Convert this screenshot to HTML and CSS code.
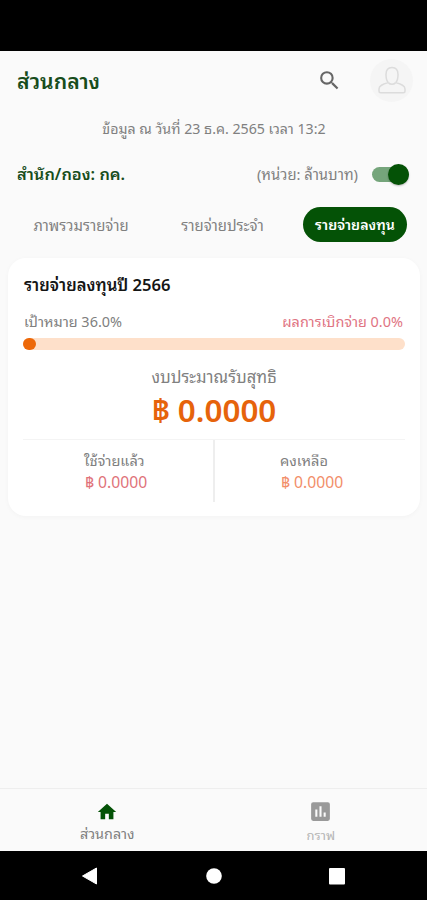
FILE: index.html
```html
<!DOCTYPE html>
<html lang="th">
<head>
<meta charset="utf-8">
<meta name="viewport" content="width=device-width, initial-scale=1">
<title>ส่วนกลาง</title>
<link rel="stylesheet" href="styles.css">
</head>
<body>
<div class="status-bar"></div>
<main>
  <header class="top">
    <h1>ส่วนกลาง</h1>
    <svg class="search" viewBox="0 0 24 24"><path d="M15.5 14h-.79l-.28-.27A6.47 6.47 0 0 0 16 9.500 6.500 6.500 0 1 0 9.500 16c1.610 0 3.090-.59 4.230-1.570l.27.28v.79l5 4.990L20.490 19zm-6 0a4.500 4.500 0 1 1 0-9 4.500 4.500 0 0 1 0 9z"/></svg>
    <div class="avatar"><svg viewBox="0 0 30 30"><path d="M11.200 17.600C9.700 16 9 13 9 9.500 9 5 11.200 2.500 15 2.500s6 2.500 6 7c0 3.500-.7 6.500-2.200 8.100M11.200 17.600c2.200 2.200 5.400 2.200 7.600 0M11.200 17.600C5.500 19.200 2 20.500 2 24v2.200q0 1.500 1.500 1.500h23q1.500 0 1.500-1.500V24c0-3.500-3.500-4.800-9.200-6.400"/></svg></div>
  </header>
  <p class="date">ข้อมูล ณ วันที่ 23 ธ.ค. 2565 เวลา 13:2</p>
  <div class="office">
    <strong>สำนัก/กอง: กค.</strong>
    <span class="unit">(หน่วย: ล้านบาท)</span>
    <span class="switch"></span>
  </div>
  <nav class="tabs">
    <span class="tab">ภาพรวมรายจ่าย</span>
    <span class="tab">รายจ่ายประจำ</span>
    <span class="tab active">รายจ่ายลงทุน</span>
  </nav>
  <section class="card">
    <h2>รายจ่ายลงทุนปี 2566</h2>
    <div class="labels"><span>เป้าหมาย 36.0%</span><span class="result">ผลการเบิกจ่าย 0.0%</span></div>
    <div class="progress"><i></i></div>
    <p class="net">งบประมาณรับสุทธิ</p>
    <p class="total">฿ 0.0000</p>
    <div class="split">
      <div class="spent"><p>ใช้จ่ายแล้ว</p><b>฿ 0.0000</b></div>
      <div class="left"><p>คงเหลือ</p><b>฿ 0.0000</b></div>
    </div>
  </section>
</main>
<nav class="bottom">
  <div class="home"><svg viewBox="0 0 24 24"><path d="M10 20v-6h4v6h5v-8h3L12 3 2 12h3v8z"/></svg><span>ส่วนกลาง</span></div>
  <div class="graph"><svg viewBox="0 0 24 24"><path d="M19 3H5a2 2 0 0 0-2 2v14a2 2 0 0 0 2 2h14a2 2 0 0 0 2-2V5a2 2 0 0 0-2-2zM9 17H7v-7h2zm4 0h-2V7h2zm4 0h-2v-4h2z"/></svg><span>กราฟ</span></div>
</nav>
<div class="system">
  <svg viewBox="0 0 18 20"><path d="M1.500 10 15.500 2v16z" stroke="#fff" stroke-linejoin="round"/></svg>
  <svg viewBox="0 0 18 20"><circle cx="9" cy="10" r="7.800"/></svg>
  <svg viewBox="0 0 18 20"><rect x="1" y="2" width="16" height="16.500" rx="1"/></svg>
</div>
</body>
</html>
```
FILE: styles.css
```css
* { box-sizing: border-box; margin: 0; }
body {
  width: 427px; height: 900px; overflow: hidden;
  display: flex; flex-direction: column;
  background: #fafafa; color: #808080;
  font-family: "Noto Sans", "Noto Sans Thai Looped", Garuda, Sarabun, sans-serif;
  font-size: 15px; white-space: nowrap;
}
.status-bar { height: 51px; background: #000; flex: none; }
main { flex: 1; }
.top { height: 58px; display: flex; align-items: center; padding: 0 14px 0 17px; }
h1 { flex: 1; font-size: 21.200px; line-height: 30px; font-weight: 600; color: #174d1c; padding-top: 1px; }
.search { width: 25px; height: 25px; fill: #666; margin-right: 28px; }
.avatar { width: 43px; height: 43px; border-radius: 50%; background: #f5f5f5; display: grid; place-items: center; }
.avatar svg { width: 30px; height: 30px; fill: none; stroke: #dcdcdc; stroke-width: 1.500; stroke-linejoin: round; }
.date { height: 40px; line-height: 40px; text-align: center; font-size: 14.200px; padding-left: 1px; }
.office { height: 50px; display: flex; align-items: center; padding: 0 18px 0 17px; }
.office strong { flex: 1; font-size: 16.400px; line-height: 22px; font-weight: 600; color: #174d1c; }
.unit { font-size: 14.800px; line-height: 20px; margin: 0 14px 1px 0; }
.switch { width: 37px; height: 15px; border-radius: 8px; background: #75a57b; position: relative; }
.switch::after { content: ""; position: absolute; right: 0; top: -3px; width: 21px; height: 21px; border-radius: 50%; background: #045206; box-shadow: 0 1px 2px #0004; }
.tabs { height: 51px; display: grid; grid-template-columns: 128px 125px 104px; column-gap: 15px; padding-left: 17px; align-items: center; text-align: center; }
.tab { height: 35px; line-height: 36px; font-size: 14.900px; }
.active { background: #045206; color: #fff; border-radius: 18px; font-size: 14.200px; font-weight: 600; margin-left: 3px; margin-right: -3px; }
.card { margin: 8px 7px 0 8px; height: 258px; padding: 15px 15px 0; background: #fff; border-radius: 18px; box-shadow: 0 1px 5px #00000008; }
h2 { color: #151515; font-size: 16.600px; line-height: 24px; font-weight: 600; padding-left: 1px; }
.labels { display: flex; justify-content: space-between; height: 24px; line-height: 24px; margin: 13px 2px 4px 1px; font-size: 14.450px; }
.result { color: #df7483; }
.progress { height: 12px; border-radius: 6px; background: #fee0ca; }
.progress i { display: block; width: 13px; height: 12px; border-radius: 6px; background: #ed6808; }
.net { text-align: center; font-size: 16.600px; line-height: 26px; margin-top: 14px; }
.total { text-align: center; color: #e6630b; font-size: 31.400px; line-height: 40px; font-weight: 600; }
.split { display: grid; grid-template-columns: 192px 1fr; border-top: 1px solid #f4f4f4; margin-top: 9px; height: 63px; }
.split div { display: flex; flex-direction: column; padding-top: 10px; line-height: 21px; }
.split p { font-size: 14.600px; }
.split b { font-size: 15.700px; font-weight: 400; padding: 1px 0 0 1px; }
.spent { padding-left: 61px; border-right: 2px solid #eee; }
.left { padding-left: 65px; }
.spent b { color: #e07279; }
.left b { color: #f28e69; }
.bottom { height: 63px; flex: none; border-top: 1px solid #eee; display: grid; grid-template-columns: 1fr 1fr; }
.bottom div { display: flex; flex-direction: column; align-items: center; padding-top: 12px; }
.bottom svg { width: 22px; height: 22px; fill: #045206; }
.bottom .graph svg { width: 25px; height: 25px; margin-top: -2px; fill: #999; }
.bottom span { font-size: 14.400px; line-height: 21px; padding-left: 1px; }
.bottom .graph span { color: #b5b5b5; font-size: 13px; line-height: 23px; }
.system { height: 49px; flex: none; background: #000; display: flex; justify-content: space-between; padding: 15px 81px 0 81px; }
.system svg { width: 18px; height: 20px; fill: #fff; }
```
